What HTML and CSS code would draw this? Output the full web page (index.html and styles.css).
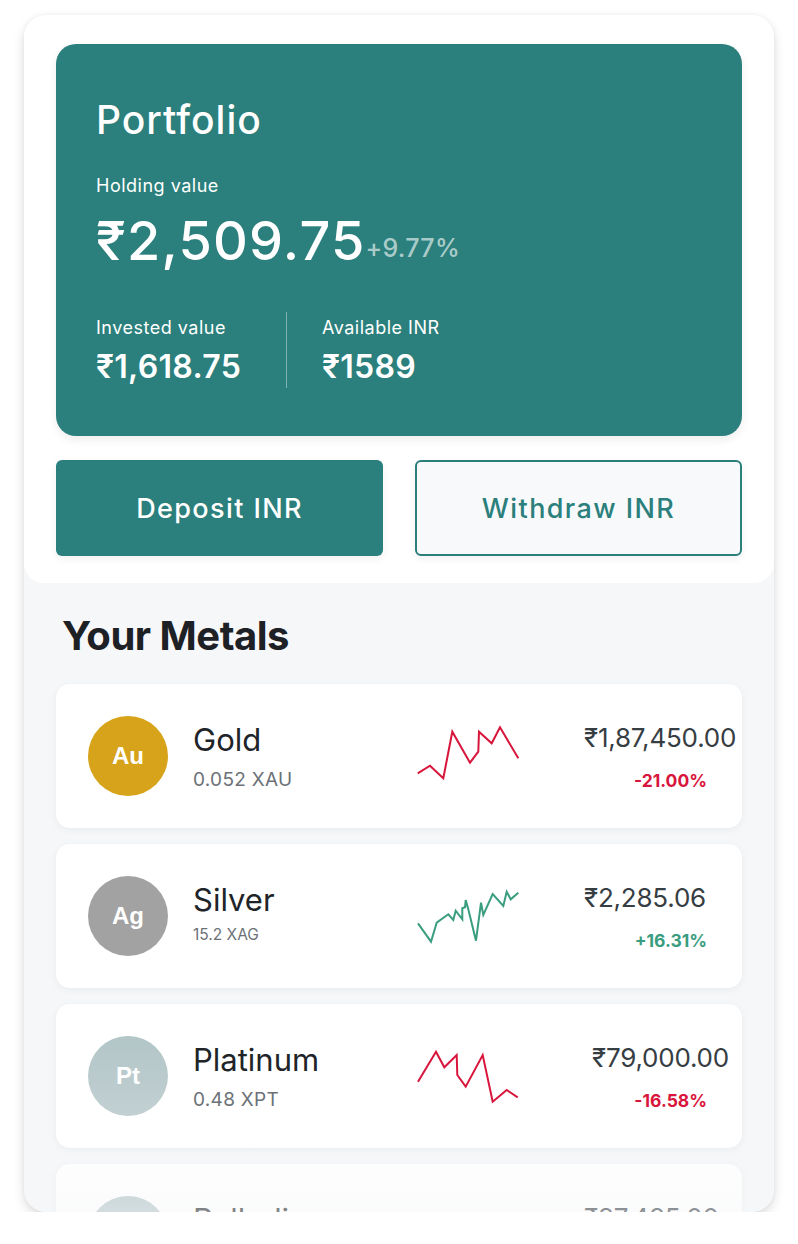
FILE: index.html
```html
<!DOCTYPE html>
<html lang="en">
<head>
<meta charset="utf-8">
<title>Portfolio</title>
<link rel="stylesheet" href="styles.css">
</head>
<body>
<div class="phone">
  <section class="top">
    <div class="portfolio">
      <h1 class="title">Portfolio</h1>
      <div class="label">Holding value</div>
      <div class="holding"><span class="amount">₹2,509.75</span><span class="change">+9.77%</span></div>
      <div class="stats">
        <div class="stat">
          <div class="label">Invested value</div>
          <div class="stat-value">₹1,618.75</div>
        </div>
        <div class="stat stat-right">
          <div class="label">Available INR</div>
          <div class="stat-value">₹1589</div>
        </div>
      </div>
    </div>
    <div class="actions">
      <button class="btn btn-primary">Deposit INR</button>
      <button class="btn btn-outline">Withdraw INR</button>
    </div>
  </section>

  <section class="metals">
    <h2 class="metals-title">Your Metals</h2>
    <div class="list">
      <div class="metal">
        <div class="coin coin-au">Au</div>
        <div class="info">
          <div class="name">Gold</div>
          <div class="sub">0.052 XAU</div>
        </div>
        <svg class="spark" viewBox="0 0 102 60" width="102" height="60">
          <polyline class="line-down" points="0.7,47.3 13,39.7 26.3,52.3 35.3,5.7 53,36.7 61.3,25.7 62,5.7 74.7,17.3 83,1.3 101.3,32.3"/>
        </svg>
        <div class="right">
          <div class="price">₹1,87,450.00</div>
          <div class="pct down">-21.00%</div>
        </div>
      </div>

      <div class="metal">
        <div class="coin coin-ag">Ag</div>
        <div class="info">
          <div class="name">Silver</div>
          <div class="sub small">15.2 XAG</div>
        </div>
        <svg class="spark" viewBox="0 0 102 60" width="102" height="60">
          <polyline class="line-up" points="1,37.3 14,55.7 19.7,36.7 31.3,28.3 36.3,34 38.7,24.7 45.3,33.3 45.3,22.3 48,21.3 48.7,14 51.3,23.3 59,54.7 64,16.7 66.3,29 75.7,8 86.3,20 89.7,5.7 93.7,13.3 101.3,6.7"/>
        </svg>
        <div class="right">
          <div class="price">₹2,285.06</div>
          <div class="pct up">+16.31%</div>
        </div>
      </div>

      <div class="metal">
        <div class="coin coin-pt">Pt</div>
        <div class="info">
          <div class="name">Platinum</div>
          <div class="sub">0.48 XPT</div>
        </div>
        <svg class="spark" viewBox="0 0 102 60" width="102" height="60">
          <polyline class="line-down" points="1,35.7 19,5.7 27.3,21.3 39.7,9 40.3,29 48.7,40.7 65.7,9 75.7,55.7 89.7,44 100.7,51.3"/>
        </svg>
        <div class="right">
          <div class="price price-shift">₹79,000.00</div>
          <div class="pct down">-16.58%</div>
        </div>
      </div>

      <div class="metal">
        <div class="coin coin-pt">Pd</div>
        <div class="info">
          <div class="name">Palladium</div>
          <div class="sub">0.12 XPD</div>
        </div>
        <svg class="spark" viewBox="0 0 102 60" width="102" height="60">
          <polyline class="line-up" points="1,40 14,30 27,44 40,20 52,32 64,12 76,26 88,10 101,18"/>
        </svg>
        <div class="right">
          <div class="price">₹37,485.00</div>
          <div class="pct up">+4.12%</div>
        </div>
      </div>
    </div>
    <div class="fade"></div>
  </section>
</div>
</body>
</html>
```

FILE: styles.css
```css
* {
  box-sizing: border-box;
}

html, body {
  margin: 0;
  padding: 0;
  background: #ffffff;
}

body {
  font-family: "Inter", "Noto Sans", "DejaVu Sans", sans-serif;
  color: #1f2328;
  padding: 15px 24px 0;
}

.phone {
  width: 750px;
  height: 1197px;
  border-radius: 22px;
  overflow: hidden;
  background: #f6f7f9;
  display: flex;
  flex-direction: column;
  box-shadow: 0 5px 12px rgba(0, 0, 0, 0.13), 0 0 5px rgba(0, 0, 0, 0.05);
}

/* ---------- top area ---------- */
.top {
  background: #ffffff;
  padding: 29px 32px 27px;
  border-radius: 0 0 20px 20px;
}

.portfolio {
  background: #2b7f7c;
  border-radius: 20px;
  padding: 53px 40px 48px;
  color: #ffffff;
  box-shadow: 0 4px 10px rgba(0, 0, 0, 0.07);
}

.title {
  margin: 0 0 33px;
  font-size: 39px;
  line-height: 46px;
  font-weight: 500;
  letter-spacing: 1px;
}

.label {
  font-size: 18px;
  line-height: 20px;
  font-weight: 400;
  letter-spacing: 0.5px;
}

.holding {
  margin-top: 13px;
  height: 64px;
  display: flex;
  align-items: baseline;
  white-space: nowrap;
}

.amount {
  font-size: 54px;
  line-height: 64px;
  font-weight: 500;
  letter-spacing: 1.2px;
}

.change {
  font-size: 25px;
  font-weight: 500;
  letter-spacing: 0.3px;
  color: rgba(255, 255, 255, 0.62);
  transform: translateY(-3px);
}

.stats {
  display: flex;
  margin-top: 39px;
}

.stat {
  width: 190px;
  padding: 6px 0 2px;
}

.stat-right {
  width: auto;
  flex: 1;
  border-left: 1px solid rgba(255, 255, 255, 0.4);
  padding-left: 35px;
}

.stat-value {
  margin-top: 10px;
  font-size: 32px;
  line-height: 38px;
  font-weight: 600;
  letter-spacing: 0.3px;
}

.actions {
  display: grid;
  grid-template-columns: 1fr 1fr;
  gap: 32px;
  margin-top: 24px;
}

.btn {
  height: 96px;
  border-radius: 6px;
  font-family: "Inter", "Noto Sans", sans-serif;
  font-size: 27px;
  font-weight: 500;
  letter-spacing: 1.4px;
  cursor: pointer;
  box-shadow: 0 3px 8px rgba(0, 0, 0, 0.06);
}

.btn-primary {
  background: #2b7f7c;
  color: #ffffff;
  border: none;
}

.btn-outline {
  background: #f7f9fa;
  color: #2b7f7c;
  border: 2px solid #2b7f7c;
}

/* ---------- metals ---------- */
.metals {
  flex: 1;
  position: relative;
  padding-top: 29px;
}

.metals-title {
  margin: 0 0 24px 38px;
  font-size: 40px;
  line-height: 48px;
  font-weight: 700;
  letter-spacing: -0.5px;
  color: #1d2125;
}

.list {
  display: flex;
  flex-direction: column;
  gap: 16px;
  padding: 0 32px;
}

.metal {
  height: 144px;
  flex: none;
  background: #ffffff;
  border-radius: 14px;
  padding: 0 32px;
  display: flex;
  align-items: center;
  box-shadow: 0 2px 8px rgba(0, 0, 0, 0.05);
}

.coin {
  width: 80px;
  height: 80px;
  border-radius: 50%;
  flex: none;
  display: flex;
  align-items: center;
  justify-content: center;
  color: #ffffff;
  font-family: "Liberation Sans", Arial, sans-serif;
  font-weight: 700;
  font-size: 24px;
}

.coin-au { background: #d6a31b; }
.coin-ag { background: #a2a2a2; }
.coin-pt { background: linear-gradient(180deg, #b2c5c7 0%, #c2d0d2 100%); }

.info {
  width: 224px;
  flex: none;
  margin-left: 25px;
}

.name {
  font-size: 31px;
  line-height: 36px;
  font-weight: 400;
  color: #202428;
}

.sub {
  margin-top: 11px;
  font-size: 19px;
  line-height: 22px;
  letter-spacing: 0.3px;
  color: #6b7177;
}

.sub.small {
  font-size: 15.5px;
  line-height: 18px;
  letter-spacing: 0;
  margin-top: 8px;
  margin-bottom: 6px;
}

.spark {
  flex: none;
  overflow: visible;
}

.spark polyline {
  fill: none;
  stroke-width: 2;
}

.line-down { stroke: #d8153b; }
.line-up { stroke: #3a9d7f; }

.right {
  flex: 1;
  min-width: 0;
  padding-left: 65px;
  display: flex;
  flex-direction: column;
  align-items: flex-start;
}

.price {
  font-size: 26px;
  line-height: 32px;
  color: #363d43;
  white-space: nowrap;
  letter-spacing: -0.2px;
}

.price-shift {
  margin-left: 8px;
}

.pct {
  align-self: flex-end;
  margin-top: 17px;
  margin-right: 3px;
  font-size: 17.5px;
  line-height: 20px;
  font-weight: 700;
}

.pct.down { color: #d8153b; }
.pct.up { color: #3a9d7f; }

.fade {
  position: absolute;
  left: 0;
  right: 0;
  bottom: 0;
  height: 175px;
  pointer-events: none;
  background: linear-gradient(180deg, rgba(246, 247, 249, 0) 0%, rgba(246, 247, 249, 0.42) 40%, rgba(246, 247, 249, 0.93) 100%);
}
```
